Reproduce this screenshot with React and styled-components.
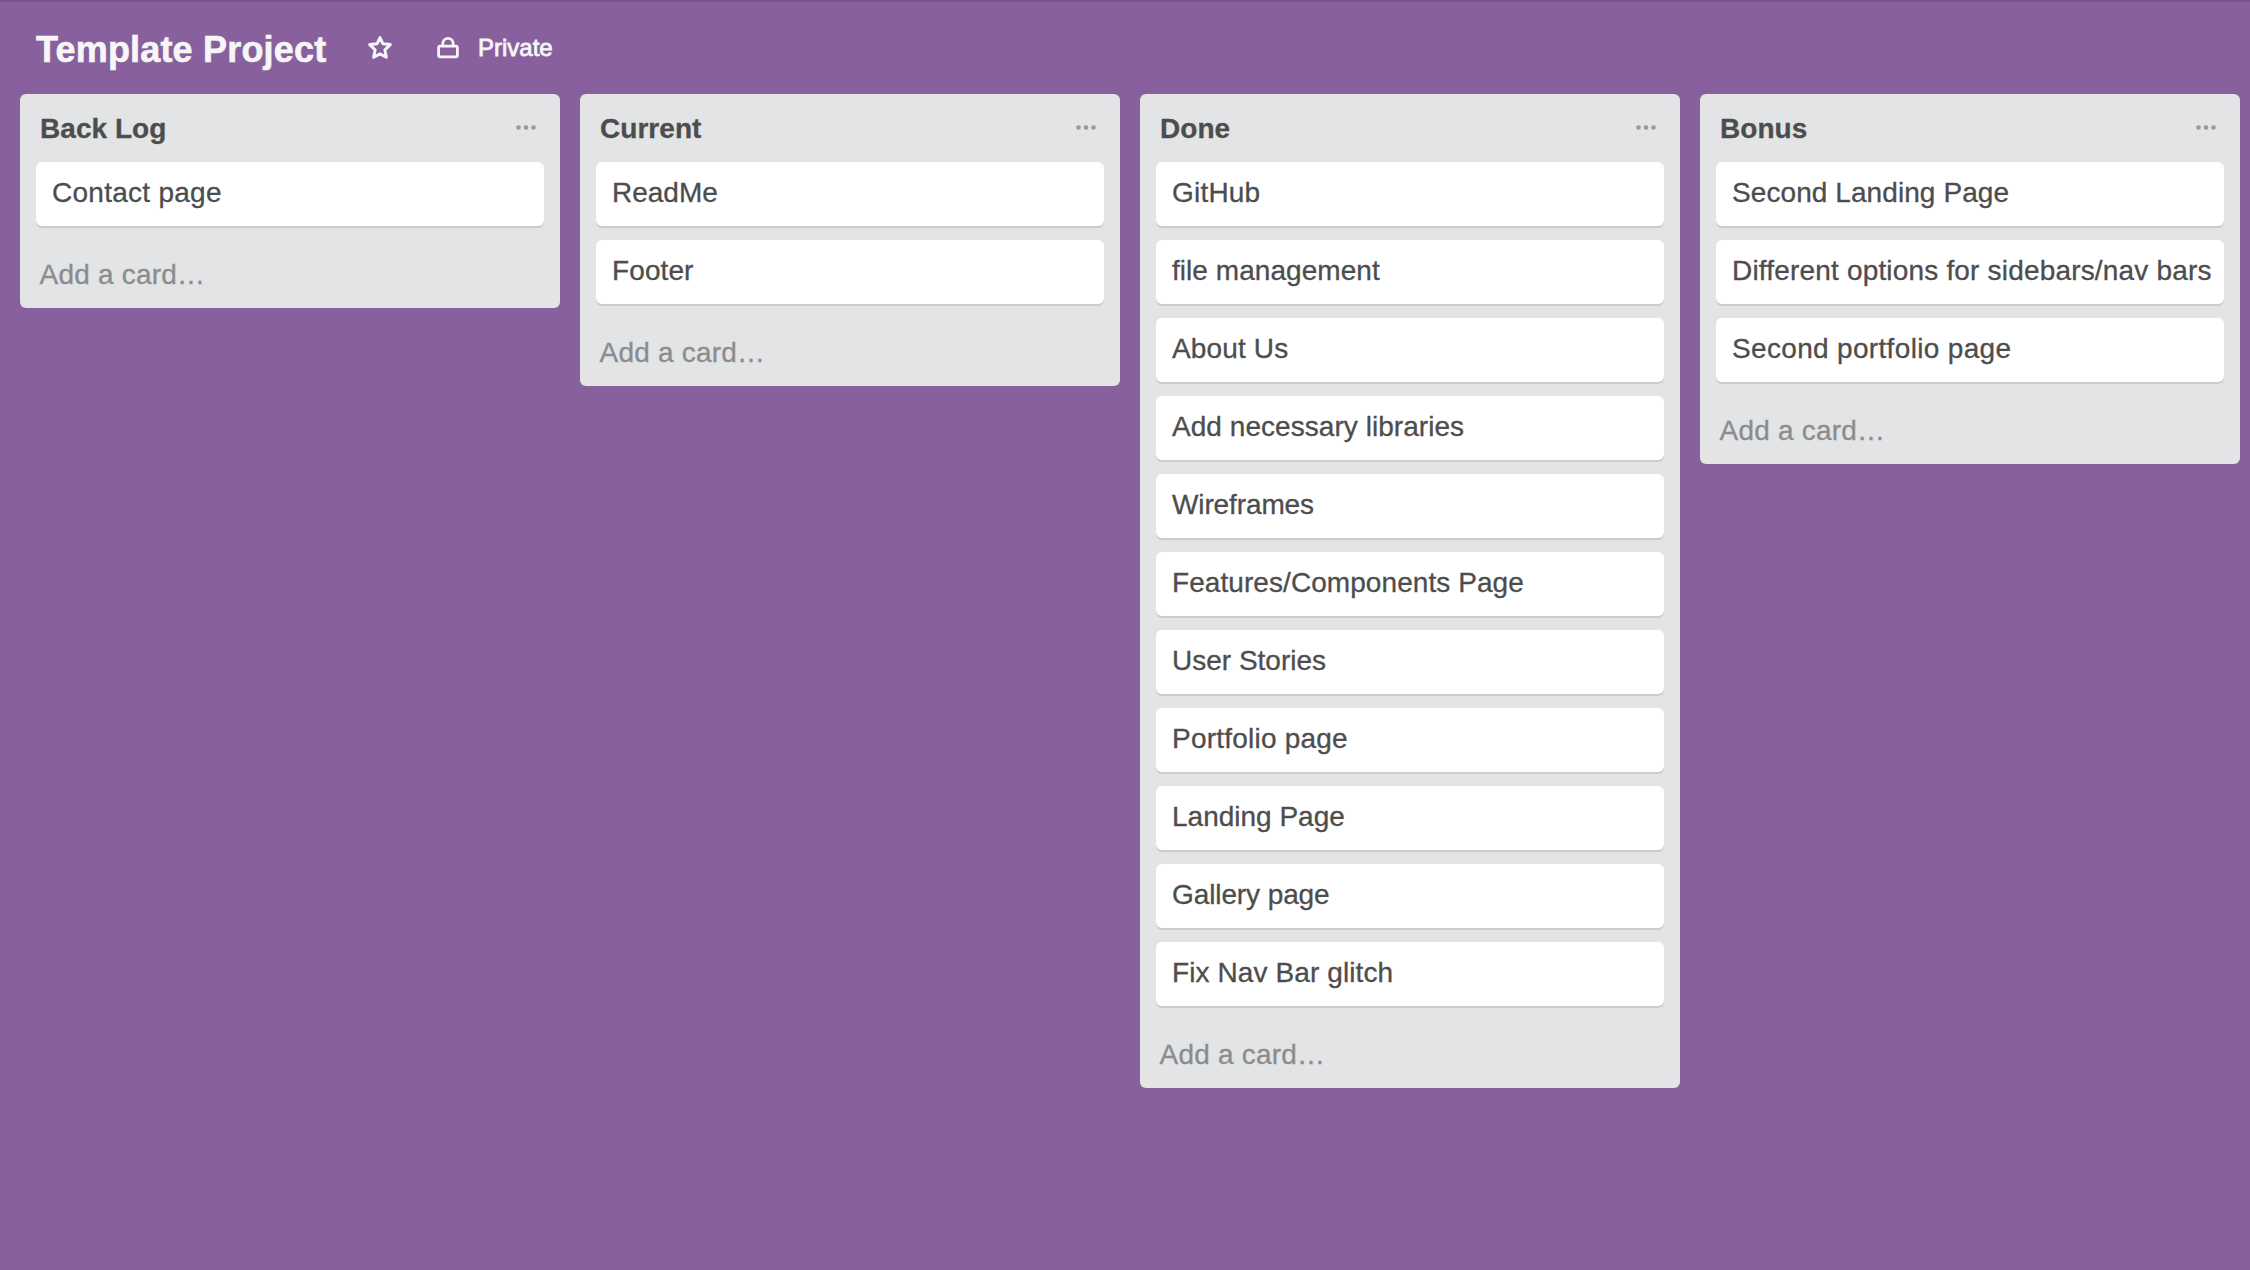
import React from "react";
import styled, { createGlobalStyle } from "styled-components";

const GlobalStyle = createGlobalStyle`
  *, *::before, *::after { box-sizing: border-box; }
  body { margin: 0; background: #89609e; overflow: hidden; }
  h1, h2 { margin: 0; }
  button { border: 0; padding: 0; background: none; font: inherit; text-align: left; }
`;

const Page = styled.div`
  height: 1270px;
  border-top: 2px solid #7b568e;
  background: #89609e;
  color: #4d4d4d;
  font-family: "Helvetica Neue", "Liberation Sans", Arial, sans-serif;
  font-size: 28px;
  line-height: 36px;
  white-space: nowrap;
  -webkit-text-stroke: 0.3px currentColor;
`;

const Header = styled.header`
  display: flex;
  align-items: flex-start;
  height: 92px;
  padding: 27px 0 0 36px;
  color: #f6f6f6;
`;

const BoardTitle = styled.h1`
  width: 332px;
  padding-top: 1px;
  font-size: 36px;
  font-weight: 700;
  line-height: 40px;
  letter-spacing: 0.18px;
  -webkit-text-stroke: 0.6px currentColor;
`;

const StarButton = styled.button`
  display: flex;
  width: 68px;
  padding-top: 6px;
`;

const Visibility = styled.button`
  display: flex;
  gap: 18px;
  padding-top: 6px;
  color: inherit;
`;

const VisibilityLabel = styled.span`
  margin-top: -1px;
  font-size: 24px;
  line-height: 28px;
  -webkit-text-stroke: 0.8px currentColor;
`;

const Lists = styled.main`
  display: flex;
  align-items: flex-start;
  gap: 20px;
  padding-left: 20px;
`;

const List = styled.section`
  flex: 0 0 540px;
  padding: 0 16px 15px;
  border-radius: 6px;
  background: #e2e4e6;
`;

const ListHeader = styled.div`
  display: flex;
  justify-content: space-between;
  height: 68px;
  padding: 16px 7px 0 4px;
`;

const ListTitle = styled.h2`
  padding-top: 1px;
  font-size: 28px;
  font-weight: 700;
  line-height: 36px;
  letter-spacing: 0.05px;
`;

const Cards = styled.div`
  display: grid;
  gap: 14px;
`;

const Card = styled.article`
  height: 64px;
  padding: 13px 0 15px 16px;
  border-radius: 6px;
  background: #fff;
  box-shadow: 0 2px 0 #ccc;
  letter-spacing: ${(p) => p.$tracking}px;
`;

const AddCard = styled.button`
  display: block;
  margin: 31px 0 0 3.5px;
  color: #8c8c8c;
  letter-spacing: 0.22px;
`;

const Star = () => (
  <svg width="26" height="26" viewBox="0 0 26 26" fill="none" stroke="#f6f6f6" strokeWidth="3" strokeLinejoin="round">
    <path d="M12 2.5 14.8 8.7 22.3 9.6 16.9 14.8 18.3 22.3 12 18.9 5.7 22.3 7.1 14.8 1.7 9.6 9.2 8.7Z" />
  </svg>
);

const Lock = () => (
  <svg width="24" height="26" viewBox="0 0 24 26" fill="none" stroke="#f6f6f6" strokeWidth="2.8">
    <rect x="2.6" y="11.2" width="18.8" height="10.6" rx="1.5" />
    <path d="M6.8 11V8.6a5.2 5.2 0 0 1 10.4 0V11" />
  </svg>
);

const Dots = () => (
  <svg width="25" height="36" viewBox="0 0 25 36" fill="#999">
    <circle cx="6.5" cy="17.5" r="2.3" />
    <circle cx="14" cy="17.5" r="2.3" />
    <circle cx="21.5" cy="17.5" r="2.3" />
  </svg>
);

const lists = [
  { title: "Back Log", cards: [{ text: "Contact page", tracking: 0.27 }] },
  { title: "Current", cards: [{ text: "ReadMe" }, { text: "Footer", tracking: 0.1 }] },
  {
    title: "Done",
    cards: [
      { text: "GitHub", tracking: 0.2 },
      { text: "file management", tracking: 0.05 },
      { text: "About Us", tracking: 0.15 },
      { text: "Add necessary libraries", tracking: 0.05 },
      { text: "Wireframes", tracking: -0.12 },
      { text: "Features/Components Page", tracking: 0.07 },
      { text: "User Stories" },
      { text: "Portfolio page", tracking: 0.22 },
      { text: "Landing Page" },
      { text: "Gallery page", tracking: -0.1 },
      { text: "Fix Nav Bar glitch", tracking: 0.1 },
    ],
  },
  {
    title: "Bonus",
    cards: [
      { text: "Second Landing Page", tracking: 0.08 },
      { text: "Different options for sidebars/nav bars", tracking: 0.18 },
      { text: "Second portfolio page", tracking: 0.33 },
    ],
  },
];

export default function App() {
  return (
    <Page>
      <GlobalStyle />
      <Header>
        <BoardTitle>Template Project</BoardTitle>
        <StarButton aria-label="Star board"><Star /></StarButton>
        <Visibility><Lock /><VisibilityLabel>Private</VisibilityLabel></Visibility>
      </Header>
      <Lists>
        {lists.map((list) => (
          <List key={list.title}>
            <ListHeader><ListTitle>{list.title}</ListTitle><Dots /></ListHeader>
            <Cards>
              {list.cards.map(({ text, tracking = 0 }) => (
                <Card key={text} $tracking={tracking}>{text}</Card>
              ))}
            </Cards>
            <AddCard>Add a card…</AddCard>
          </List>
        ))}
      </Lists>
    </Page>
  );
}
